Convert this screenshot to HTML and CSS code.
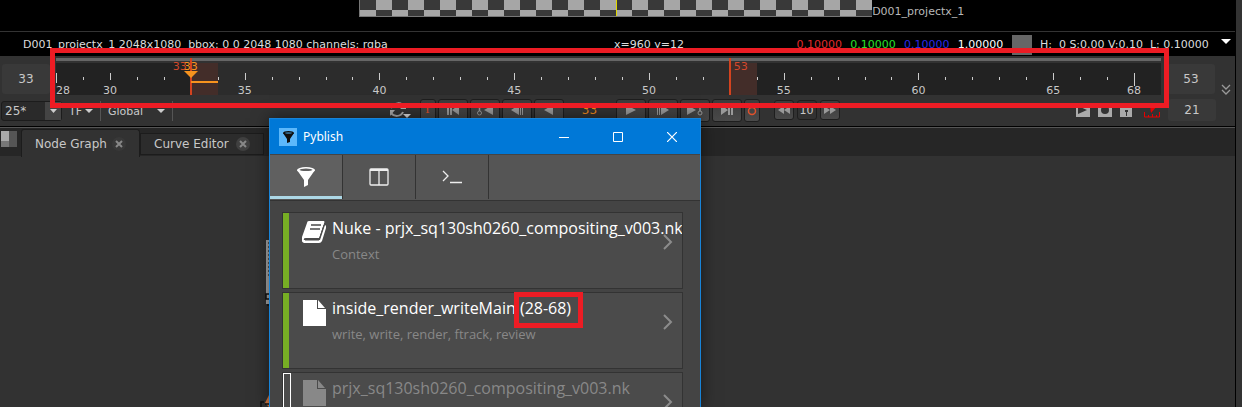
FILE: index.html
```
<!DOCTYPE html>
<html lang="en">
<head>
<meta charset="utf-8">
<title>Compositor</title>
<link rel="stylesheet" href="styles.css">
</head>
<body>
<div class="app">
  <section class="viewer">
    <div class="canvas">
      <div class="checker"></div>
      <span class="format">D001_projectx_1</span>
    </div>
    <div class="info">
      <span class="meta">D001_projectx_1 2048x1080&nbsp; bbox: 0 0 2048 1080 channels: rgba</span>
      <span>x=960 y=12</span>
      <div class="pixel">
        <span class="r">0.10000</span><span class="g">0.10000</span><span class="b">0.10000</span><span>1.00000</span>
        <i class="swatch"></i>
        <span class="hsv">H:&nbsp; 0 S:0.00 V:0.10&nbsp; L: 0.10000</span>
        <button class="plain" aria-label="Viewer options"><svg width="10" height="5"><path d="M0 0h10L5 5z" fill="#fff"/></svg></button>
      </div>
    </div>
  </section>

  <section class="panel">
    <div class="time-row">
      <input class="field frame-in" value="33" aria-label="In frame">
      <div class="timeline">
        <div class="scrub"></div>
        <div class="frames" id="frames"></div>
        <div class="mark"></div>
      </div>
      <input class="field frame-out" value="53" aria-label="Out frame">
      <button class="plain more" aria-label="More"><svg width="10" height="12" fill="none" stroke="#999" stroke-width="1.3"><path d="M1 1l4 4 4-4M1 6l4 4 4-4"/></svg></button>
    </div>
    <div class="control-row">
      <div class="left">
        <div class="fps"><input value="25*" aria-label="Frames per second"><button aria-label="Choose rate"><svg width="7" height="4"><path d="M0 0h7L3.500 4z" fill="#ccc"/></svg></button></div>
        <label class="drop tf"><select aria-label="Time format"><option>TF</option></select></label>
        <label class="drop global"><select aria-label="Range"><option>Global</option></select></label>
      </div>
      <div class="center">
        <button class="plain cycle" aria-label="Playback mode"><svg width="22" height="18" fill="none" stroke="#aaa" stroke-width="2"><path d="M2 7c3-6 11-6 13-1M14 11c-2 5-9 5-12 1"/><path d="M17 3v5h-6zM1 15V9h5z" fill="#aaa" stroke="none"/><path d="M14 13h8l-4 4z" fill="#ddd" stroke="none"/></svg></button>
        <button class="key slim in" aria-label="Set in">I</button>
        <button class="key" aria-label="First frame"><svg width="14" height="12"><path d="M1 1h2v10H1zM4 1h2v10H4zM13 1v10L6 6z"/></svg></button>
        <button class="key" aria-label="Previous key"><svg width="18" height="12"><path d="M17 1v10L8 6z"/><path d="M3.500 1v6" stroke="#999" stroke-width="1.500"/><circle cx="3.500" cy="9" r="2" fill="none" stroke="#999"/></svg></button>
        <button class="key" aria-label="Step back"><svg width="14" height="12"><path d="M9 1v10L1 6zM10 1h1v10h-1zM12 1h1v10h-1z"/></svg></button>
        <button class="key" aria-label="Play backward"><svg width="12" height="12"><path d="M10 1v10L1 6z"/></svg></button>
        <input class="now" value="33" aria-label="Current frame">
        <button class="key" aria-label="Play forward"><svg width="12" height="12"><path d="M1 1v10l10-5z"/></svg></button>
        <button class="key" aria-label="Step forward"><svg width="14" height="12"><path d="M5 1v10l8-5zM3 1h1v10H3zM1 1h1v10H1z"/></svg></button>
        <button class="key" aria-label="Next key"><svg width="18" height="12"><path d="M1 1v10l9-5z"/><path d="M14 1v6" stroke="#999" stroke-width="1.500"/><circle cx="14" cy="9" r="2" fill="none" stroke="#999"/></svg></button>
        <button class="key" aria-label="Last frame"><svg width="14" height="12"><path d="M1 1v10l7-5zM8 1h2v10H8zM11 1h2v10h-2z"/></svg></button>
        <button class="key slim" aria-label="Set out"><svg width="10" height="12"><circle cx="5" cy="7" r="3.500" fill="none" stroke="#e0512c" stroke-width="1.500"/><path d="M5 3.500l3-2" stroke="#e0512c"/></svg></button>
        <button class="key jump first" aria-label="Skip back"><svg width="12" height="8"><path d="M6 0v8L0 4zM12 0v8L6 4z"/></svg></button>
        <input class="step" value="10" aria-label="Skip size">
        <button class="key jump" aria-label="Skip forward"><svg width="12" height="8"><path d="M0 0v8l6-4zM6 0v8l6-4z"/></svg></button>
      </div>
      <div class="right">
        <button class="plain" aria-label="Flipbook"><svg width="14" height="14"><path d="M0 0h14v14H0z" fill="#aaa"/><path d="M2 3v8l9-4z" fill="#333"/></svg></button>
        <button class="plain" aria-label="Capture"><svg width="14" height="14"><path d="M0 0h14v14H0z" fill="#aaa"/><circle cx="7" cy="7" r="4" fill="#333"/></svg></button>
        <button class="plain" aria-label="Lock range"><svg width="12" height="14"><path d="M0 4h12v10H0zM2 0h8v4H2z" fill="#aaa"/><path d="M5 7h3v2H7v4H6V9H5z" fill="#333"/></svg></button>
        <button class="plain limits" aria-label="Limit range"><svg width="16" height="16"><path d="M6 4h7L7 11z" fill="#e60000"/><path d="M.5 10v5h15v-5M4.500 15v-2M8.500 15v-3M12.500 15v-2" fill="none" stroke="#e60000"/></svg></button>
        <input class="field total" value="21" aria-label="Frame count">
      </div>
    </div>
  </section>

  <nav class="tabs">
    <span class="pane-icon"><i></i><i></i><i></i></span>
    <div class="tab on"><button class="name">Node Graph</button><button class="shut" aria-label="Close Node Graph"><svg width="8" height="8"><path d="M1 1l6 6M7 1L1 7" stroke="#888" stroke-width="2"/></svg></button></div>
    <div class="tab"><button class="name">Curve Editor</button><button class="shut" aria-label="Close Curve Editor"><svg width="8" height="8"><path d="M1 1l6 6M7 1L1 7" stroke="#888" stroke-width="2"/></svg></button></div>
  </nav>

  <main class="graph">
    <svg class="nodes" width="16" height="180"><path d="M8 12h8v64H8z" fill="#aaa"/><path d="M10 15h3M10 19h3M10 23h3M10 27h3M10 31h3M10 35h3M10 39h3M10 43h3M10 47h3" stroke="#555" stroke-width="2"/><path d="M12 66H8v5h4M9 77h7" stroke="#111" fill="none" stroke-width="1.500"/><path d="M7 175l4-8v12z" fill="#d47a43"/><path d="M3 179v-5h3M7 176h4" stroke="#111" fill="none" stroke-width="1.500"/></svg>
    <section class="window">
      <header class="title">
        <svg width="18" height="18"><path d="M0 0h18v18H0z" fill="#5cb8fb"/><path d="M4 5l4 6v4l3-1v-3l4-6z" fill="#111"/><ellipse cx="9.500" cy="5" rx="5.500" ry="2" fill="#111"/><ellipse cx="9.500" cy="5" rx="3.500" ry=".7" fill="#3c80ad"/></svg>
        <h1>Pyblish</h1>
        <button class="plain" aria-label="Minimize"><svg width="10" height="10"><path d="M0 5.500h10" stroke="#fff"/></svg></button>
        <button class="plain" aria-label="Maximize"><svg width="10" height="10"><path d="M.5.5h9v9h-9z" fill="none" stroke="#fff"/></svg></button>
        <button class="plain" aria-label="Close"><svg width="10" height="10"><path d="M0 0l10 10M10 0L0 10" stroke="#fff" stroke-width="1.200"/></svg></button>
      </header>
      <nav class="tools">
        <button class="on" aria-label="Artist"><svg width="20" height="22"><path d="M1 4l7 10v7l4-2v-5l7-10z" fill="#fff"/><ellipse cx="10" cy="4" rx="9" ry="3" fill="#fff"/><ellipse cx="10" cy="3.800" rx="6.500" ry="1.300" fill="#606060"/></svg></button>
        <button aria-label="Overview"><svg width="20" height="18" fill="none" stroke="#eee" stroke-width="1.300"><rect x="1" y="1" width="18" height="16" rx="1"/><path d="M1 2h18" stroke-width="2"/><path d="M10 3v14"/></svg></button>
        <button aria-label="Terminal"><svg width="20" height="14" fill="none" stroke="#eee" stroke-width="1.300"><path d="M1 1l5 5-5 5M8 12.500h12"/></svg></button>
      </nav>
      <ul class="cards">
        <li class="card">
          <svg class="type" width="24" height="24"><path d="M7 1h14q2 0 1 2l-5 15H4q-3 0-2 2h16l5-15c2 1 1 2 1 3l-4 13q-1 2-3 2H3c-3 0-4-3-3-6L5 3q0-2 2-2z" fill="#fff"/><path d="M2 18L7 1h14q2 0 1 2l-5 15z" fill="#fff"/><path d="M9 5h10M8 9h10" stroke="#4b4b4b" stroke-width="1.500"/><path d="M3 20h14l5-15" stroke="#4b4b4b" fill="none"/></svg>
          <div class="text"><h2>Nuke - prjx_sq130sh0260_compositing_v003.nk</h2><p>Context</p></div>
          <button class="plain go" aria-label="Details"><svg width="10" height="16"><path d="M1 1l7 7-7 7" fill="none" stroke="#8c8c8c" stroke-width="2"/></svg></button>
        </li>
        <li class="card">
          <svg class="type" width="24" height="26" fill="#fff"><path d="M1 0h14v9h9v17H1zM16 0l7 8h-7z"/></svg>
          <div class="text"><h2>inside_render_writeMain <span class="range">(28-68)</span></h2><p>write, write, render, ftrack, review</p></div>
          <button class="plain go" aria-label="Details"><svg width="10" height="16"><path d="M1 1l7 7-7 7" fill="none" stroke="#8c8c8c" stroke-width="2"/></svg></button>
        </li>
        <li class="card off">
          <svg class="type" width="24" height="26" fill="#888"><path d="M1 0h14v9h9v17H1zM16 0l7 8h-7z"/></svg>
          <div class="text"><h2>prjx_sq130sh0260_compositing_v003.nk</h2></div>
          <button class="plain go" aria-label="Details"><svg width="10" height="16"><path d="M1 1l7 7-7 7" fill="none" stroke="#8c8c8c" stroke-width="2"/></svg></button>
        </li>
      </ul>
    </section>
  </main>
</div>
<script src="timeline.js"></script>
</body>
</html>
```
FILE: timeline.js
```
const first = 28, last = 68, inFrame = 33, outFrame = 53;
const frames = document.getElementById("frames");

for (let n = first; n <= last; n++) {
  const cell = document.createElement("div");
  cell.className = "frame";
  if (n > inFrame && n < outFrame) cell.classList.add("within");
  if (n === inFrame || n === outFrame) {
    cell.classList.add("bound", n === inFrame ? "start" : "end");
    cell.innerHTML = `<b class="limit">${n}</b>`;
    if (n === inFrame) {
      cell.innerHTML += `<b class="head">${n}</b><svg class="pointer" width="14" height="7"><path d="M0 0h14L7 7z" fill="#f7931e"/></svg><i class="cached"></i>`;
    }
  } else {
    const edge = n === first || n === last;
    const major = edge || n % 5 === 0;
    if (major) cell.classList.add("major");
    if (edge) cell.classList.add(n === first ? "edge-start" : "edge-end");
    cell.innerHTML = `<i class="tick"></i>` + (major ? `<span class="num">${n}</span>` : "");
  }
  frames.append(cell);
}
```
FILE: styles.css
```
* { box-sizing: border-box; }
body { margin: 0; background: #333; color: #c8c8c8; font: 11px/14px "DejaVu Sans", Verdana, sans-serif; }
button, input, select { font: inherit; color: inherit; margin: 0; padding: 0; border: 0; background: none; }
button, label { display: flex; align-items: center; justify-content: center; }
svg { display: block; flex: none; }
.app { display: flex; flex-direction: column; height: 100vh; margin-right: 6px; border-right: 1px solid #000; background: #323232; overflow: hidden; }

.viewer { background: #000; flex: none; }
.canvas { display: flex; height: 32px; padding-left: 29%; border-bottom: 1px solid #333; }
.checker { position: relative; width: 513px; height: 17px; margin-left: 1px; border-left: 1px solid #777; border-bottom: 1px solid #777; background: repeating-conic-gradient(#393939 0 25%, #a6a6a6 0 50%) 16px -6px / 32px 32px; }
.checker::after { content: ""; position: absolute; left: 50%; top: 0; bottom: 0; width: 1px; background: #e0d800; }
.format { padding-top: 5px; color: #b8b8b8; }
.info { display: grid; grid-template-columns: 593fr 181fr 438fr; padding: 1px 4px 0 23px; height: 24px; align-items: center; color: #ddd; white-space: nowrap; }
.pixel { display: flex; align-items: center; justify-content: space-between; padding-left: 2px; color: #fff; }
.r { color: #e02a2a; } .g { color: #2ae02a; } .b { color: #2a2ae8; }
.swatch { width: 20px; height: 20px; background: #666; }
.hsv { color: #ddd; }
.pixel .plain { margin: 0 0 6px 4px; }

.panel { flex: none; border-bottom: 1px solid #000; }
.time-row { display: flex; gap: 6px; padding: 2px 4px 2px 2px; height: 41px; }
.field { width: 48px; background: #393939; border-radius: 3px; text-align: center; font-size: 12px; }
.frame-in, .frame-out { height: 30px; margin-top: 6px; }
.more { margin-top: 22px; height: 20px; }
.timeline { position: relative; flex: 1; min-width: 0; }
.scrub { height: 3px; margin-bottom: 2px; background: #666; }
.frames { display: grid; grid-template-columns: repeat(41, 1fr); height: 32px; background: #222; }
.frame { position: relative; padding-top: 14px; }
.within { background: #2c2c2c; }
.bound { background: #432d29; }
.bound::before { content: ""; position: absolute; left: -1px; top: -5px; bottom: 0; width: 2px; background: #d3431f; }
.tick { display: block; width: 1px; height: 3px; background: #ccc; }
.major { padding-top: 10px; }
.major .tick { height: 7px; }
.edge-start .tick { height: 10px; }
.edge-end .tick { height: 13px; }
.num { position: absolute; left: 0; top: 21px; transform: translateX(-50%); }
.edge-start .num { transform: none; }
.limit, .head { position: absolute; top: -3px; font-weight: normal; color: #d3482b; }
.start .limit { right: 31px; }
.end .limit { left: 4px; }
.head { left: -7px; color: #f7931e; }
.pointer { position: absolute; left: -7px; top: 8px; }
.cached { position: absolute; left: 0; right: 0; top: 18px; height: 2px; background: #f7931e; }
.mark { position: absolute; z-index: 2; inset: -10px -8px -13px -6px; border: 5px solid #ed1c24; pointer-events: none; }

.control-row { display: grid; grid-template-columns: 1fr auto 1fr; height: 29px; padding: 1px 8px 0 1px; align-items: start; }
.left, .center, .right { display: flex; align-items: center; height: 24px; }
.left { font-size: 12px; height: 26px; }
.fps { display: flex; width: 61px; height: 20px; border: 1px solid #1c1c1c; border-radius: 3px; background: #2a2a2a; }
.fps input { flex: 1; min-width: 0; padding-left: 3px; }
.fps button { width: 16px; background: #444; }
.drop { position: relative; height: 20px; border-right: 1px solid #555; }
.drop select { appearance: none; width: 100%; height: 20px; padding: 2px 7px 0; font-size: 11px; }
.drop::after { content: ""; position: absolute; right: 7px; top: 8px; border: 4px solid transparent; border-top-color: #ccc; border-bottom: 0; }
.tf { width: 39px; }
.global { width: 72px; }
.center { gap: 2px; }
.cycle { width: 29px; justify-content: flex-start; }
.key { width: 30px; height: 23px; border: 1px solid #1e1e1e; border-radius: 3px; background: linear-gradient(#3c3c3c, #4a4a4a); }
.key svg { fill: #999; }
.slim { width: 16px; }
.in { color: #e0512c; font-family: "DejaVu Serif", serif; }
.now { width: 48px; text-align: center; color: #f08a1c; font-size: 12px; }
.step { width: 20px; height: 20px; border: 1px solid #1e1e1e; border-radius: 3px; text-align: center; margin: 0 1px; }
.jump { width: 20px; height: 20px; }
.first { margin-left: 12px; }
.right { justify-content: flex-end; padding-right: 11px; gap: 8px; }
.limits { margin: 0 0 0 4px; }
.total { height: 22px; }

.tabs { display: flex; flex: none; height: 29px; border-top: 1px solid #555; background: #262626; }
.pane-icon { display: grid; grid-template-columns: 8px 8px; grid-template-rows: 10px 6px; margin: 3px 4px 0 1px; height: 16px; }
.pane-icon i { background: #aaa; }
.pane-icon i:nth-child(2) { grid-row: span 2; background: #555; }
.pane-icon i:nth-child(3) { background: #777; }
.tab { display: flex; align-items: center; justify-content: space-between; width: 124px; height: 22px; margin-top: 5px; padding: 0 13px; border: 1px solid #1c1c1c; background: #2c2c2c; font-size: 12px; }
.tab.on { width: 119px; height: 28px; margin-top: 1px; border-bottom: 0; border-radius: 3px 3px 0 0; background: #323232; }
.shut { width: 14px; height: 14px; border-radius: 7px; background: #404040; }
.on .shut { background: #383838; }

.graph { position: relative; flex: 1; min-height: 0; }
.nodes { position: absolute; left: 258px; top: 72px; }
.window { position: absolute; left: 269px; top: -38px; bottom: 0; width: 432px; overflow: hidden; z-index: 1; border: 1px solid #1883d7; border-bottom: 0; background: #444; box-shadow: 0 0 16px #0008; font-family: "Open Sans", sans-serif; color: #fff; }
.title { display: flex; align-items: center; height: 35px; padding: 0 23px 0 9px; background: #0078d7; }
h1 { flex: 1; margin: 0 0 0 6px; font: 12px/16px "Noto Sans", sans-serif; }
.title button { width: 10px; margin-left: 44px; }
.tools { display: flex; height: 47px; padding-bottom: 1px; border-top: 1px solid #444; border-bottom: 1px solid #333; background: #555; }
.tools button { width: 73px; border-right: 1px solid #333; }
.tools .on { background: #606060; box-shadow: inset 0 -3px #add8e6; }
.cards { display: grid; gap: 3px; margin: 0; padding: 11px 17px 0 12px; list-style: none; }
.card { position: relative; display: flex; height: 77px; padding: 7px 0 0 18px; border: 1px solid #333; background: #4b4b4b; overflow: hidden; }
.card::before { content: ""; position: absolute; left: 0; top: 0; bottom: 0; width: 6px; background: #77ae24; }
.card.off::before { background: none; border: 1px solid #fff; }
.type { margin: 0 6px 0 1px; }
.text { white-space: nowrap; }
h2 { margin: 0; font-size: 16px; line-height: 16px; font-weight: normal; }
.text p { margin: 9px 0 0; font-size: 13px; line-height: 18px; color: #888; }
.off h2 { color: #888; }
.range { position: relative; }
.range::after { content: ""; position: absolute; inset: -5px -12px -9px -6px; border: 5px solid #ed1c24; }
.card:nth-child(2) { overflow: visible; }
.go { position: absolute; right: 9px; top: 21px; }
```
